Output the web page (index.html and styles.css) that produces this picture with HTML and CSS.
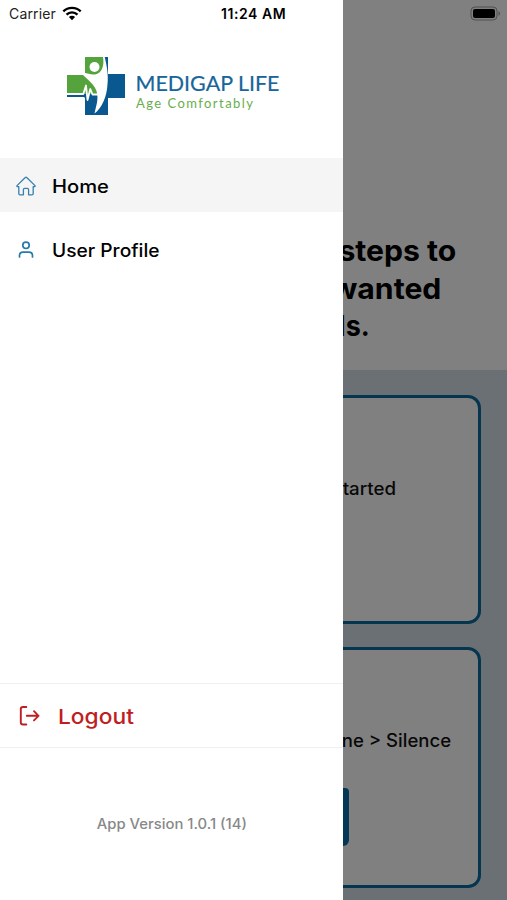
FILE: index.html
```html
<!DOCTYPE html>
<html lang="en">
<head>
<meta charset="utf-8">
<title>Medigap Life</title>
<link rel="stylesheet" href="styles.css">
</head>
<body>
<div class="screen">
  <aside class="drawer">
    <header class="status">
      <span class="carrier">Carrier</span>
      <svg class="wifi" width="20" height="15" viewBox="0 0 20 15" fill="none" stroke="#000" stroke-width="2.4"><path d="M1.3 5.3C6 .7 14 .7 18.7 5.3M4.5 8.6c3.2-3 7.800-3 11 0"/><path d="M6.900 11c1.800-1.700 4.400-1.700 6.200 0L10 14.200z" fill="#000" stroke="none"/></svg>
      <span class="time">11:24 AM</span>
    </header>
    <div class="brand">
      <svg width="216" height="62" viewBox="0 0 216 62">
        <path d="M19 1h23v17h17v24H42v17H19V42H1V19h18z" fill="#095990"/>
        <path d="M19 1h19v18l-7 19H1V19h18z" fill="#55a33c"/>
        <path d="M10.500 12.500C17 17 24 18.500 29 18.500C36 17 38.500 10 37 1h1.700C41 10 42.500 20 41.500 28C41 40 36 52 28.500 57.500C30 50 33 43 30.500 35C27 26 19 22 10.500 12.500z" fill="#fff"/>
        <path d="M0 38H17.300L20 29.500 21.500 44 24.300 33 26.500 38.500H32" fill="none" stroke="#fff" stroke-width="1.800" stroke-linejoin="round"/>
        <path d="M1 41.500h17.500" stroke="#fff" stroke-width="1"/>
        <circle cx="28.500" cy="11" r="5" fill="#fff"/>
        <text class="brand-name" x="69.500" y="34.500" textLength="144" lengthAdjust="spacingAndGlyphs">MEDIGAP LIFE</text>
        <text class="brand-tag" x="70" y="51.500" textLength="117" lengthAdjust="spacing">Age Comfortably</text>
      </svg>
    </div>
    <nav class="menu">
      <a class="item active">
        <svg width="20" height="20" viewBox="0 0 20 20" fill="none" stroke="#3781ad" stroke-width="1.3" stroke-linejoin="round" stroke-linecap="round"><path d="M1 9.600 9.300 1.500q.7-.6 1.400 0L19 9.600q.4 1-.6 1h-1.200v7q0 1.200-1.200 1.200h-3.400v-5q0-1.400-1.300-1.400H8.700q-1.300 0-1.300 1.400v5H4q-1.200 0-1.200-1.200v-7H1.600q-1 0-.6-1z"/></svg>
        <span class="t-home">Home</span>
      </a>
      <a class="item">
        <svg width="20" height="20" viewBox="0 0 20 20" fill="none" stroke="#287aaa" stroke-width="1.700" stroke-linecap="round"><circle cx="10" cy="5.300" r="3.200"/><path d="M3.500 17v-1.300q0-3.600 3.600-3.600h5.800q3.600 0 3.600 3.600V17"/></svg>
        <span class="t-profile">User Profile</span>
      </a>
    </nav>
    <a class="logout">
      <svg width="22" height="22" viewBox="0 0 22 22" fill="none" stroke="#bf1e22" stroke-width="1.900" stroke-linecap="round" stroke-linejoin="round"><path d="M8.300 2H5Q2.800 2 2.800 4.100v13.300q0 2.100 2.200 2.100h3.300M8.800 10.800h11.700M16 6.200l4.500 4.600-4.500 4.600"/></svg>
      <span class="t-logout">Logout</span>
    </a>
    <footer class="version"><span class="t-version">App Version 1.0.1 (14)</span></footer>
  </aside>
  <main class="page">
    <div class="top">
      <svg class="battery" width="31" height="16" viewBox="0 0 31 16"><rect x="1" y="1" width="26" height="13" rx="4" fill="none" stroke="#505050"/><rect x="3" y="3" width="22" height="9" rx="2"/><path d="M28.500 5q3 2.500 0 5z" fill="#505050"/></svg>
      <h1><span class="h-a">steps to</span><span class="h-b">wanted</span><span class="h-c">ls.</span></h1>
    </div>
    <div class="cards">
      <section class="card first"><p class="p-a">started</p></section>
      <section class="card second"><p class="p-b">ne &gt; Silence</p><div class="button"></div></section>
    </div>
  </main>
</div>
</body>
</html>
```
FILE: styles.css
```css
* { box-sizing: border-box; }
body { margin: 0; font-family: Inter, "Liberation Sans", sans-serif; color: #000; }
svg { display: block; flex: none; }
.screen { display: flex; width: 507px; height: 900px; overflow: hidden; background: #fff; }
.drawer { width: 343px; flex: none; display: flex; flex-direction: column; background: #fff; }
.status { height: 28px; display: flex; align-items: center; padding-left: 9px; line-height: 28px; white-space: nowrap; }
.carrier { width: 53px; font-size: 14px; letter-spacing: .15px; color: #222; }
.time { margin-left: 139px; font-size: 14px; font-weight: 600; letter-spacing: .55px; }
.wifi { margin-top: -2px; }
.brand { height: 130px; padding: 28px 0 0 66px; }
.brand-name { font: 22px Lato, sans-serif; fill: #17659a; stroke: #17659a; stroke-width: .2px; }
.brand-tag { font: 13px Lato, sans-serif; fill: #67ae4d; }
.menu { display: flex; flex-direction: column; gap: 10px; flex: 1; }
.item { height: 54px; padding: 1px 0 0 16px; display: flex; align-items: center; gap: 16px; font-size: 18px; font-weight: 500; white-space: nowrap; }
.item span, .t-logout { transform-origin: left center; margin-top: 1px; }
.active { background: #f5f5f5; }
.t-home { transform: scaleX(1.12); }
.t-profile { transform: scaleX(1.065); }
.logout { height: 65px; border: solid #f0f0f0; border-width: 1px 0; display: flex; align-items: center; gap: 18px; padding-left: 18px; color: #bf1e22; font-size: 20.5px; font-weight: 500; }
.t-logout { transform: scaleX(1.11); }
.version { height: 152px; padding-top: 66px; text-align: center; font-size: 14px; line-height: 20px; font-weight: 500; color: #888; }
.t-version { display: inline-block; transform: scaleX(1.06); }
.page { width: 164px; overflow: hidden; background: #808080; display: flex; flex-direction: column; }
.top { height: 370px; flex: none; display: flex; flex-direction: column; align-items: flex-end; }
.battery { margin: 6px 6px 0 0; }
h1 { margin: 210px 0 0; display: flex; flex-direction: column; align-items: flex-end; font-size: 29px; line-height: 37.5px; white-space: nowrap; }
h1 span, .card p { transform-origin: right center; }
.h-a { margin-right: 51px; transform: scaleX(1.04); }
.h-b { margin-right: 66px; transform: scaleX(1.04); }
.h-c { margin-right: 137px; transform: scaleX(.93); }
.cards { flex: 1; padding: 25px 26px 0 0; background: #6a7074; display: flex; flex-direction: column; gap: 23px; }
.card { border: solid #063550; border-width: 3px 3px 3px 0; border-radius: 0 13px 13px 0; background: #808080; display: flex; flex-direction: column; overflow: hidden; }
.first { height: 229px; }
.second { height: 241px; }
.card p { margin: 78px 0 0; align-self: flex-end; font-size: 18px; line-height: 26px; font-weight: 500; white-space: nowrap; color: #080808; }
.card .p-a { margin-right: 82px; transform: scaleX(1.04); }
.card .p-b { margin-right: 27px; transform: scaleX(1.03); }
.button { margin-top: 34px; width: 6px; height: 58px; border-radius: 0 6px 9px 0; background: #043756; }
```
